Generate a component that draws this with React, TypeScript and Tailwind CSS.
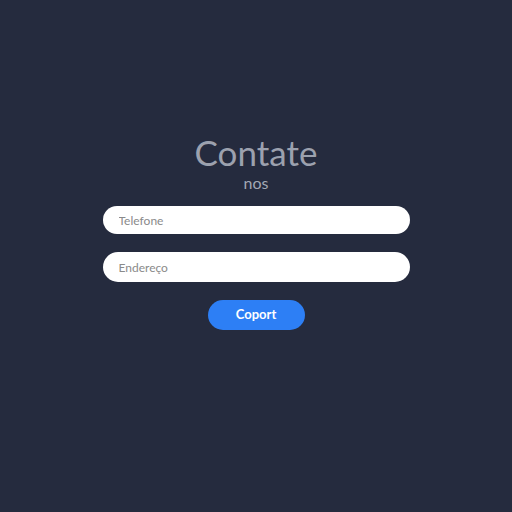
export default function App() {
  return (
    <div className="min-h-screen w-full bg-[#252b3e] flex flex-col items-center pt-[132px] font-['Lato',sans-serif]">
      <h1 className="text-[35px] leading-[40px] text-[#9ca1ae] font-normal">Contate</h1>
      <p className="text-[16px] leading-[20px] text-[#a3a8b4] mt-[1px]">nos</p>
      <form className="mt-[13px] w-[307px] flex flex-col gap-[18px]">
        <input
          className="h-[28px] w-full rounded-full bg-white px-4 text-[12px] text-[#333] placeholder:text-[#8a8a8a] outline-none"
          placeholder="Telefone"
        />
        <input
          className="h-[30px] w-full rounded-full bg-white px-4 text-[12px] text-[#333] placeholder:text-[#8a8a8a] outline-none"
          placeholder="Endereço"
        />
        <div className="flex justify-center">
          <button
            type="button"
            className="h-[30px] w-[97px] rounded-full bg-[#2d7ff5] text-white text-[13px] font-bold"
          >
            Coport
          </button>
        </div>
      </form>
    </div>
  );
}
